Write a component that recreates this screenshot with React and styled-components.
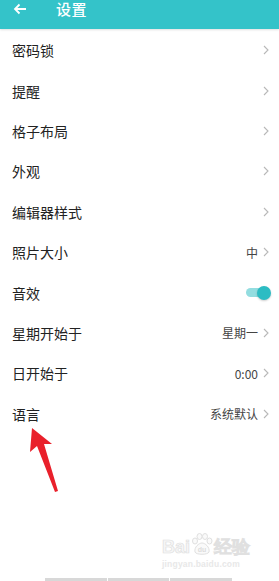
import styled, { createGlobalStyle } from 'styled-components'

const GlobalStyle = createGlobalStyle`
  html, body {
    margin: 0;
    padding: 0;
    background: #ffffff;
  }
  body {
    font-family: "Noto Sans CJK SC", "Noto Sans", sans-serif;
  }
`;

const Screen = styled.div`
  position: relative;
  width: 279px;
  height: 581px;
  overflow: hidden;
  background: #ffffff;
  display: flex;
  flex-direction: column;
`;

const Header = styled.div`
  height: 29px;
  flex-shrink: 0;
  background: #34c3c9;
  display: flex;
  align-items: flex-start;
  box-shadow: 0 1px 2px rgba(0, 0, 0, 0.12);
  color: #ffffff;
`;

const Back = styled.div`
  width: 56px;
  padding-left: 13px;
  box-sizing: border-box;
  height: 17px;
  display: flex;
  align-items: center;
`;

const Title = styled.div`
  font-size: 15px;
  line-height: 17px;
  font-weight: 500;
  letter-spacing: 0.5px;
`;

const List = styled.div`
  padding-top: 1px;
  display: flex;
  flex-direction: column;
`;

const Row = styled.div`
  height: 40.4px;
  display: flex;
  align-items: center;
  padding: 0 10px 0 12px;
`;

const Label = styled.div`
  flex: 1;
  font-size: 14px;
  color: #222222;
`;

const Value = styled.div`
  font-size: 12px;
  color: #444444;
  margin-right: 5px;
  font-family: "Noto Sans CJK SC", Roboto, sans-serif;
`;

const Chevron = styled.svg`
  width: 6px;
  height: 10px;
  flex-shrink: 0;
`;

const Toggle = styled.div`
  position: relative;
  width: 25px;
  height: 14px;
  margin-right: -2px;
  display: flex;
  align-items: center;
`;

const Track = styled.div`
  width: 20px;
  height: 9px;
  border-radius: 5px;
  background: #93dde0;
`;

const Thumb = styled.div`
  position: absolute;
  right: 0;
  top: 0;
  width: 14px;
  height: 14px;
  border-radius: 50%;
  background: #2cbcc3;
  box-shadow: 0 1px 2px rgba(0, 0, 0, 0.2);
`;

const Pointer = styled.svg`
  position: absolute;
  left: 26px;
  top: 424px;
`;

const Watermark = styled.div`
  position: absolute;
  left: 162px;
  top: 526px;
  display: flex;
  flex-direction: column;
  align-items: flex-start;
`;

const BrandLine = styled.div`
  display: flex;
  align-items: flex-end;
  height: 30px;
`;

const Brand = styled.span`
  font-family: "Liberation Sans", Arial, sans-serif;
  font-size: 18px;
  font-weight: bold;
  line-height: 18px;
  color: #f7f7f7;
  -webkit-text-stroke: 0.7px #e0e0e0;
`;

const Domain = styled.div`
  font-family: "Liberation Sans", Arial, sans-serif;
  font-size: 8.5px;
  font-weight: bold;
  color: #e8e8e8;
  margin-top: 3px;
  letter-spacing: 0.2px;
`;

const NavBar = styled.div`
  position: absolute;
  left: 45px;
  bottom: 0;
  width: 187px;
  height: 3px;
  display: flex;
  gap: 1px;
`;

const NavSeg = styled.div`
  flex: 1;
  background: #d8d8d8;
`;

const items = [
  { label: '密码锁' },
  { label: '提醒' },
  { label: '格子布局' },
  { label: '外观' },
  { label: '编辑器样式' },
  { label: '照片大小', value: '中' },
  { label: '音效', toggle: true },
  { label: '星期开始于', value: '星期一' },
  { label: '日开始于', value: '0:00' },
  { label: '语言', value: '系统默认' },
];

const Arrow = () => (
  <Chevron viewBox="0 0 6 10">
    <path d="M1 1 L5 5 L1 9" fill="none" stroke="#b8b8b8" strokeWidth="1.1" />
  </Chevron>
);

const Paw = () => (
  <svg width="24" height="24" viewBox="0 0 24 24">
    <g fill="#fafafa" stroke="#e0e0e0" strokeWidth="1">
      <ellipse cx="5" cy="9" rx="2.5" ry="3" />
      <ellipse cx="9.5" cy="4.5" rx="2.5" ry="3" />
      <ellipse cx="15" cy="4.5" rx="2.5" ry="3" />
      <ellipse cx="19.5" cy="9" rx="2.5" ry="3" />
      <path d="M5 20 C4 15 9 11 12 11 C15 11 20 15 19 20 C18 23 6 23 5 20 Z" />
    </g>
    <text x="12" y="20" textAnchor="middle" fontSize="7" fontWeight="bold" fill="#dcdcdc" fontFamily="Liberation Sans, sans-serif">du</text>
  </svg>
);

const App = () => {
  return (
    <>
      <GlobalStyle />
      <Screen>
        <Header>
          <Back>
            <svg width="14" height="12" viewBox="0 0 14 12">
              <path d="M13 6 H2 M6.5 1.5 L2 6 L6.5 10.5" fill="none" stroke="#ffffff" strokeWidth="1.8" />
            </svg>
          </Back>
          <Title>设置</Title>
        </Header>
        <List>
          {items.map((item) => (
            <Row key={item.label}>
              <Label>{item.label}</Label>
              {item.value && <Value>{item.value}</Value>}
              {item.toggle ? (
                <Toggle>
                  <Track />
                  <Thumb />
                </Toggle>
              ) : (
                <Arrow />
              )}
            </Row>
          ))}
        </List>
        <Pointer width="36" height="72" viewBox="0 0 36 72">
          <path d="M6 4 L4 28 L11 22 L29 68 L32 67 L18 20 L26 20 Z" fill="#e9202b" />
        </Pointer>
        <Watermark>
          <BrandLine>
            <Brand>Bai</Brand>
            <Paw />
            <Brand>经验</Brand>
          </BrandLine>
          <Domain>jingyan.baidu.com</Domain>
        </Watermark>
        <NavBar>
          <NavSeg />
          <NavSeg />
          <NavSeg />
        </NavBar>
      </Screen>
    </>
  );
};

export default App
